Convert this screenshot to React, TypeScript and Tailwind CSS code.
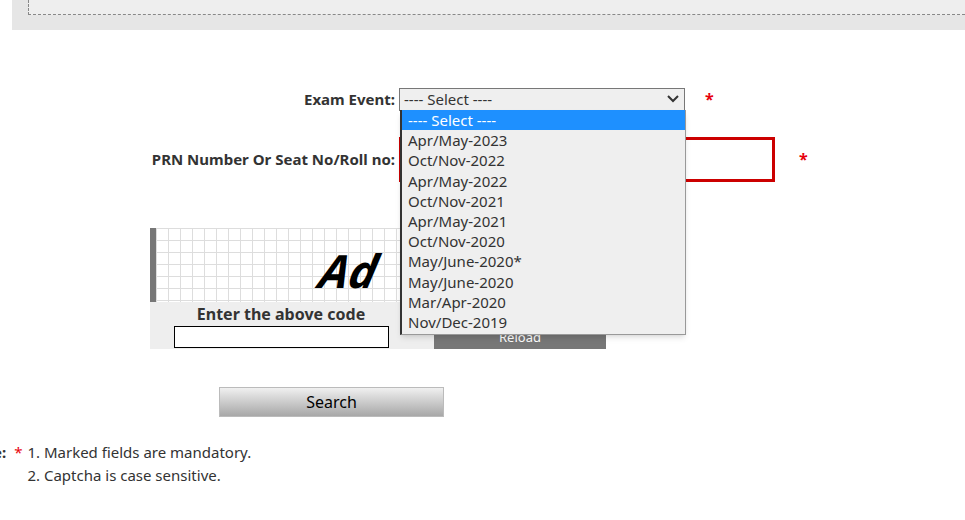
import React from "react";

const events = [
  "Apr/May-2023",
  "Oct/Nov-2022",
  "Apr/May-2022",
  "Oct/Nov-2021",
  "Apr/May-2021",
  "Oct/Nov-2020",
  "May/June-2020*",
  "May/June-2020",
  "Mar/Apr-2020",
  "Nov/Dec-2019",
];

const App = () => {
  return (
    <div className="relative w-[965px] h-[520px] bg-white overflow-hidden text-[#333] font-['DejaVu_Sans',sans-serif]">
      {/* top panel */}
      <div className="ml-[12px] h-[30px] bg-[#e6e6e6]">
        <div className="ml-[16px] h-[15px] bg-[#eeeeee] border-l border-b border-dashed border-[#888]" />
      </div>

      {/* exam event row */}
      <div className="flex items-center mt-[57px] h-[24px]">
        <div className="w-[395px] text-right text-[15px] font-bold">Exam Event:</div>
        <div className="ml-[4px] w-[286px] h-[23px] border border-[#777] bg-[#efefef] flex items-center justify-between px-[4px] text-[15px]">
          <span>---- Select ----</span>
          <svg width="14" height="10" viewBox="0 0 14 10">
            <path d="M2 2l5 5 5-5" stroke="#333" strokeWidth="2" fill="none" />
          </svg>
        </div>
        <span className="ml-[20px] text-red-600 text-[16px] font-bold">*</span>
      </div>

      {/* prn row */}
      <div className="flex items-center mt-[26px] h-[44px]">
        <div className="w-[395px] text-right text-[15px] font-bold">PRN Number Or Seat No/Roll no:</div>
        <div className="ml-[4px] w-[376px] h-[45px] border-[3px] border-[#cc0000] bg-white" />
        <span className="ml-[24px] text-red-600 text-[16px] font-bold">*</span>
      </div>

      {/* captcha */}
      <div className="flex mt-[47px] ml-[150px] w-[456px] h-[121px]">
        <div className="w-[6px] bg-[#777] h-[75px]" />
        <div className="flex-1 flex flex-col">
          <div
            className="h-[74px] bg-white relative overflow-hidden"
            style={{
              backgroundImage:
                "linear-gradient(#ddd 1px, transparent 1px), linear-gradient(90deg, #ddd 1px, transparent 1px)",
              backgroundSize: "12px 12px",
            }}
          >
            <span className="absolute left-[165px] top-[8px] text-[46px] italic font-bold -skew-x-12 font-['Liberation_Serif',serif] text-black">Ad</span>
          </div>
          <div className="flex-1 bg-[#eeeeee] flex items-end justify-between -ml-[6px]">
            <div className="flex flex-col items-center w-[262px] pb-[1px]">
              <span className="text-[16px] font-bold leading-[24px]">Enter the above code</span>
              <div className="w-[215px] h-[22px] border border-black bg-white" />
            </div>
            <div className="w-[172px] h-[22px] bg-[#777] text-white text-[13px] flex items-center justify-center">Reload</div>
          </div>
        </div>
      </div>

      {/* search */}
      <div className="mt-[38px] ml-[219px] w-[225px] h-[30px] border border-[#bbb] bg-gradient-to-b from-[#f0f0f0] to-[#a8a8a8] flex items-center justify-center text-[16px] text-black">
        Search
      </div>

      {/* notes */}
      <div className="mt-[24px] flex text-[15px] leading-[23px]">
        <span className="-ml-[7px] font-bold">e:</span>
        <span className="ml-[8px] text-red-600">*</span>
        <div className="ml-[5px]">
          <div>1. Marked fields are mandatory.</div>
          <div>2. Captcha is case sensitive.</div>
        </div>
      </div>

      {/* open dropdown */}
      <div className="absolute left-[400px] top-[110px] w-[286px] h-[225px] bg-[#efefef] border-l-[2px] border-[#333] border-b border-r border-b-[#999] border-r-[#999] shadow-md text-[15px] leading-[20.2px]">
        <div className="bg-[#1e90ff] text-white px-[6px]">---- Select ----</div>
        {events.map((e) => (
          <div key={e} className="px-[6px]">{e}</div>
        ))}
      </div>
    </div>
  );
};

export default App;
